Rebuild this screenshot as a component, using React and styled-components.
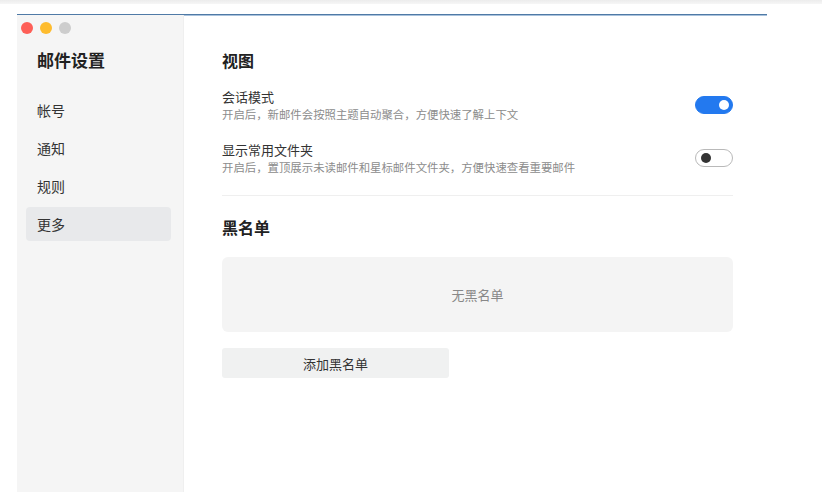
import React, { useState } from 'react';
import styled, { createGlobalStyle } from 'styled-components';

const GlobalStyle = createGlobalStyle`
  html, body {
    margin: 0;
    padding: 0;
    background: #ffffff;
    font-family: "Noto Sans CJK SC", "Noto Sans", sans-serif;
    overflow: hidden;
  }
`;

const Page = styled.div`
  width: 822px;
  height: 492px;
  display: flex;
  flex-direction: column;
`;

const TopStrip = styled.div`
  height: 4px;
  background: linear-gradient(#ececec, #f6f6f6);
  margin-bottom: 10px;
`;

const Window = styled.div`
  margin-left: 17px;
  width: 750px;
  flex: 1;
  display: flex;
  border-top: 1px solid #4f7aa6;
  box-shadow: 0 1px 0 #a9c2dc inset;
  min-height: 0;
`;

const Sidebar = styled.div`
  width: 167px;
  background: #f5f5f5;
  border-right: 1px solid #efefef;
  padding: 7px 12px 0 4px;
  box-sizing: border-box;
  display: flex;
  flex-direction: column;
`;

const Lights = styled.div`
  display: flex;
  gap: 7px;
`;

const Light = styled.span`
  width: 12px;
  height: 12px;
  border-radius: 50%;
  background: ${p => p.color};
`;

const SideTitle = styled.div`
  margin: 14px 0 0 16px;
  font-size: 17px;
  line-height: 24px;
  font-weight: 700;
  color: #222;
`;

const Nav = styled.div`
  margin: 21px 0 0 5px;
  display: flex;
  flex-direction: column;
  gap: 4px;
`;

const NavItem = styled.div`
  height: 34px;
  padding-left: 11px;
  display: flex;
  align-items: center;
  font-size: 14px;
  color: #333;
  border-radius: 4px;
  background: ${p => (p.active ? '#e8e9eb' : 'transparent')};
  cursor: pointer;
`;

const Main = styled.div`
  flex: 1;
  padding: 34px 34px 0 38px;
  box-sizing: border-box;
`;

const Heading = styled.div`
  font-size: 16px;
  line-height: 22px;
  font-weight: 700;
  color: #222;
`;

const Row = styled.div`
  display: flex;
  align-items: center;
  justify-content: space-between;
  margin-top: ${p => p.gap}px;
`;

const RowText = styled.div`
  display: flex;
  flex-direction: column;
`;

const RowTitle = styled.div`
  font-size: 13px;
  line-height: 18px;
  color: #333;
`;

const RowDesc = styled.div`
  font-size: 11.4px;
  line-height: 16px;
  color: #8c8c8c;
`;

const Toggle = styled.button`
  width: 38px;
  height: 18px;
  border-radius: 9px;
  padding: 0;
  box-sizing: border-box;
  position: relative;
  cursor: pointer;
  border: 1px solid ${p => (p.on ? '#2379ef' : '#b9b9b9')};
  background: ${p => (p.on ? '#2379ef' : '#fff')};
  &::after {
    content: '';
    position: absolute;
    top: 3px;
    left: ${p => (p.on ? '23px' : '5px')};
    width: 10px;
    height: 10px;
    border-radius: 50%;
    background: ${p => (p.on ? '#fff' : '#333')};
  }
`;

const Divider = styled.div`
  height: 1px;
  background: #efefef;
  margin: 20px 0;
`;

const Empty = styled.div`
  margin-top: 19px;
  height: 75px;
  border-radius: 6px;
  background: #f4f4f4;
  display: flex;
  align-items: center;
  justify-content: center;
  font-size: 13px;
  color: #888;
`;

const AddButton = styled.button`
  margin-top: 16px;
  width: 227px;
  height: 30px;
  border: none;
  border-radius: 3px;
  background: #f0f1f1;
  font-family: inherit;
  font-size: 13px;
  color: #333;
  cursor: pointer;
`;

export default function App() {
  const [conv, setConv] = useState(true);
  const [folders, setFolders] = useState(false);
  const items = ['帐号', '通知', '规则', '更多'];

  return (
    <Page>
      <GlobalStyle />
      <TopStrip />
      <Window>
        <Sidebar>
          <Lights>
            <Light color="#fe5f57" />
            <Light color="#febc2e" />
            <Light color="#cdcdcd" />
          </Lights>
          <SideTitle>邮件设置</SideTitle>
          <Nav>
            {items.map(i => (
              <NavItem key={i} active={i === '更多'}>{i}</NavItem>
            ))}
          </Nav>
        </Sidebar>
        <Main>
          <Heading>视图</Heading>
          <Row gap={17}>
            <RowText>
              <RowTitle>会话模式</RowTitle>
              <RowDesc>开启后，新邮件会按照主题自动聚合，方便快速了解上下文</RowDesc>
            </RowText>
            <Toggle on={conv} onClick={() => setConv(!conv)} />
          </Row>
          <Row gap={19}>
            <RowText>
              <RowTitle>显示常用文件夹</RowTitle>
              <RowDesc>开启后，置顶展示未读邮件和星标邮件文件夹，方便快速查看重要邮件</RowDesc>
            </RowText>
            <Toggle on={folders} onClick={() => setFolders(!folders)} />
          </Row>
          <Divider />
          <Heading>黑名单</Heading>
          <Empty>无黑名单</Empty>
          <AddButton>添加黑名单</AddButton>
        </Main>
      </Window>
    </Page>
  );
}
